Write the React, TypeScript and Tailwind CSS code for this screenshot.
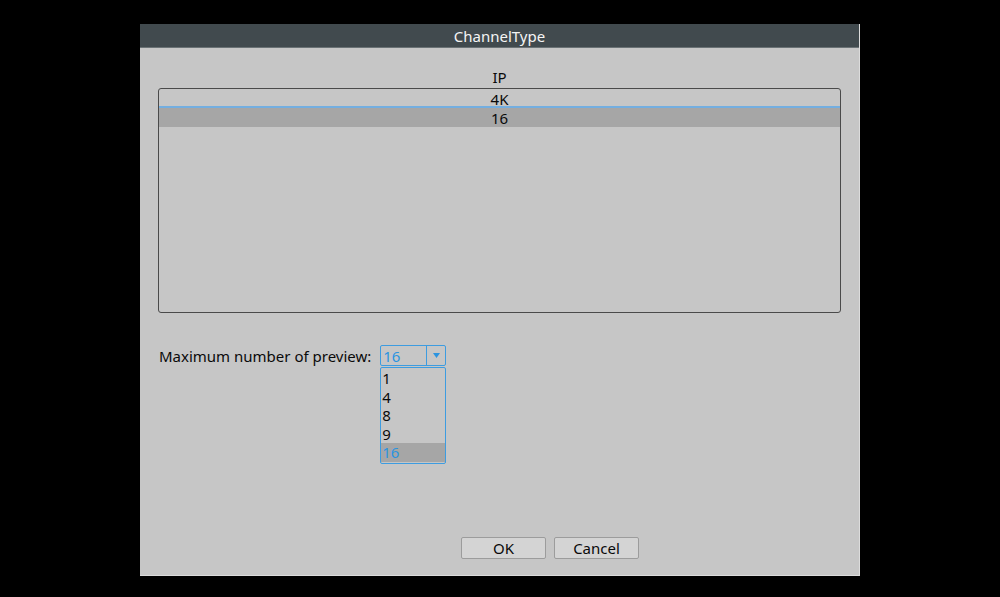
export default function App() {
  const items = ["1", "4", "8", "9", "16"];
  return (
    <div
      className="w-[1000px] h-[597px] bg-black flex flex-col items-center pt-[24px]"
      style={{ fontFamily: '"Noto Sans", "Open Sans", sans-serif' }}
    >
      <div className="w-[720px] h-[552px] flex flex-col bg-[#c6c6c6] border-r border-b border-[#dcdcdc]">
        <div className="h-[24px] bg-[#414a4e] text-[#f4f4f4] text-[15px] leading-[24px] text-center border-b border-[#6a7275]">
          ChannelType
        </div>
        <div className="flex flex-col px-[18px] flex-1">
          <div className="text-center text-[15px] leading-[18px] text-[#0a0a0a] mt-[20px]">IP</div>
          <div className="mt-[2px] h-[225px] border border-[#4a4a4a] rounded-[3px] flex flex-col text-[15px] text-[#0a0a0a]">
            <div className="h-[19px] leading-[18px] pt-[1px] text-center border-b-2 border-[#73aee0]">4K</div>
            <div className="h-[19px] leading-[19px] pt-[1px] text-center bg-[#a6a6a6]">16</div>
          </div>
          <div className="mt-[32px] flex items-start">
            <div className="text-[15px] leading-[20px] text-[#0a0a0a] mt-[1px] mr-[9px] ml-[1px]">Maximum number of preview:</div>
            <div className="flex flex-col w-[66px]">
              <div className="h-[21px] border border-[#3d9ce0] rounded-[2px] flex items-center">
                <div className="flex-1 text-[15px] leading-[19px] text-[#2b94e0] pl-[2px] pt-[1px]">16</div>
                <div className="w-[19px] h-full border-l border-[#3d9ce0] flex items-center justify-center">
                  <svg width="7" height="5" viewBox="0 0 7 5">
                    <path d="M0 0 L7 0 L3.5 5 Z" fill="#2b94e0" />
                  </svg>
                </div>
              </div>
              <div className="mt-[1px] border border-[#3d9ce0] rounded-[2px] pt-[1px] pb-[1px] flex flex-col">
                {items.map((it) => (
                  <div
                    key={it}
                    className={
                      it === "16"
                        ? "h-[19px] leading-[19px] text-[15px] pl-[1px] bg-[#a6a6a6] text-[#2b94e0]"
                        : "h-[18.6px] leading-[18px] text-[15px] pl-[1px] text-[#0a0a0a]"
                    }
                  >
                    {it}
                  </div>
                ))}
              </div>
            </div>
          </div>
          <div className="flex-1" />
          <div className="flex justify-center gap-[8px] pl-[101px] mb-[16px]">
            <button className="w-[85px] h-[22px] bg-[#d4d4d4] border border-[#9c9c9c] rounded-[2px] text-[15px] leading-[20px] text-[#0a0a0a]">
              OK
            </button>
            <button className="w-[85px] h-[22px] bg-[#d4d4d4] border border-[#9c9c9c] rounded-[2px] text-[15px] leading-[20px] text-[#0a0a0a]">
              Cancel
            </button>
          </div>
        </div>
      </div>
    </div>
  );
}
